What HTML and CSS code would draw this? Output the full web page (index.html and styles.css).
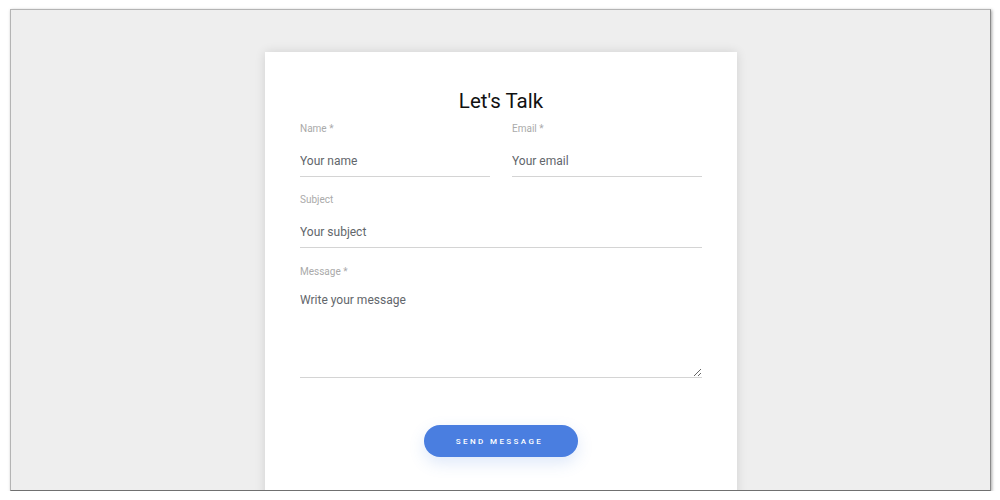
FILE: index.html
```html
<!DOCTYPE html>
<html lang="en">
<head>
    <meta charset="UTF-8">
    <meta name="viewport" content="width=device-width, initial-scale=1.0">
    <title>Let's Talk</title>
    <link rel="stylesheet" href="styles.css">
</head>
<body>
    <div class="frame">
        <form class="contact-card">
            <h2>Let's Talk</h2>

            <div class="row">
                <div class="field">
                    <label for="name">Name *</label>
                    <input id="name" type="text" placeholder="Your name">
                </div>
                <div class="field">
                    <label for="email">Email *</label>
                    <input id="email" type="email" placeholder="Your email">
                </div>
            </div>

            <div class="field field-subject">
                <label for="subject">Subject</label>
                <input id="subject" type="text" placeholder="Your subject">
            </div>

            <div class="field">
                <label for="message">Message *</label>
                <textarea id="message" placeholder="Write your message"></textarea>
            </div>

            <div class="actions">
                <button type="button" class="send-button">Send Message</button>
            </div>
        </form>
    </div>
</body>
</html>
```

FILE: styles.css
```css
*,
*::before,
*::after {
    box-sizing: border-box;
}

:root {
    --clr-frame: #eeeeee;
    --clr-card: #ffffff;
    --clr-label: #aaaaaa;
    --clr-text: #62666b;
    --clr-line: #d4d4d4;
    --clr-primary: #4a7ee0;

    --ff-body: "Roboto", "Liberation Sans", sans-serif;
}

body {
    margin: 0;
    background: #ffffff;
    font-family: var(--ff-body);
}

.frame {
    margin: 9px 0 0 10px;
    width: 981px;
    height: 482px;
    background: var(--clr-frame);
    border: 1px solid #b4b4b4;
    border-right-color: #8a8a8a;
    border-bottom-color: #707070;
    box-shadow: 1px 1px 3px rgba(0, 0, 0, 0.35);
    overflow: hidden;
    display: flex;
    justify-content: center;
    padding-top: 42px;
}

.contact-card {
    width: 472px;
    height: 470px;
    margin-left: 1px;
    background: var(--clr-card);
    box-shadow: 0 0 10px rgba(0, 0, 0, 0.12);
    padding: 37px 35px 0 35px;
    flex-shrink: 0;
}

h2 {
    margin: 0 0 9px;
    text-align: center;
    font-weight: 400;
    font-size: 20.5px;
    line-height: 24px;
    color: #111111;
}

.row {
    display: flex;
    gap: 22px;
}

.row .field {
    flex: 1;
}

.field {
    display: flex;
    flex-direction: column;
    margin-bottom: 16px;
}

.field-subject {
    margin-bottom: 17px;
}

label {
    font-size: 10px;
    line-height: 14px;
    color: var(--clr-label);
    margin-bottom: 9px;
}

input,
textarea {
    font-family: var(--ff-body);
    font-size: 12px;
    line-height: 16px;
    color: var(--clr-text);
    border: none;
    border-bottom: 1px solid var(--clr-line);
    background: transparent;
    outline: none;
    padding: 8px 0 7px;
    width: 100%;
}

input::placeholder,
textarea::placeholder {
    color: var(--clr-text);
}

textarea {
    padding: 4px 0;
    height: 90px;
    resize: vertical;
    margin: 0;
}

.actions {
    display: flex;
    justify-content: center;
    margin-top: 47px;
}

.send-button {
    width: 154px;
    height: 32px;
    border: none;
    border-radius: 16px;
    background: var(--clr-primary);
    color: #ffffff;
    font-family: var(--ff-body);
    font-size: 8px;
    font-weight: 500;
    letter-spacing: 2.4px;
    text-transform: uppercase;
    padding-left: 3px;
    box-shadow: 0 6px 16px rgba(74, 126, 224, 0.18);
    cursor: pointer;
}
```
